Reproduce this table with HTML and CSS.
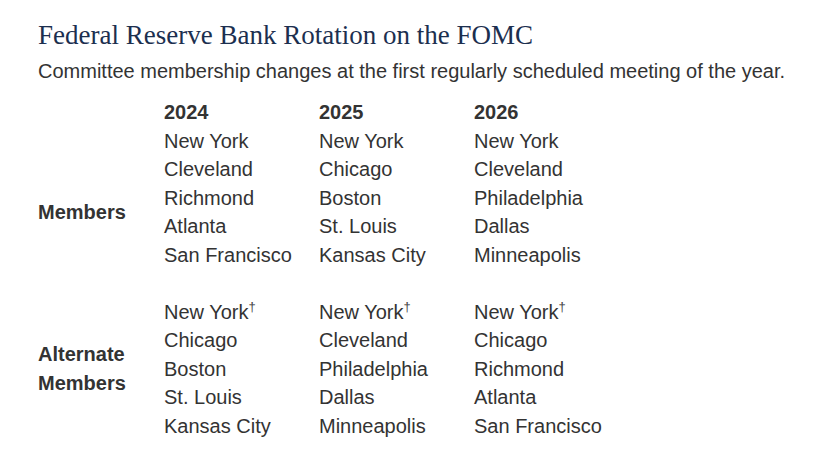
FILE: index.html
```html
<!DOCTYPE html>
<html>
<head>
<meta charset="utf-8">
<link rel="stylesheet" href="styles.css">
</head>
<body>
<div class="wrap">
  <h2 class="title">Federal Reserve Bank Rotation on the FOMC</h2>
  <p class="sub">Committee membership changes at the first regularly scheduled meeting of the year.</p>
  <table class="rot">
    <thead>
      <tr><th class="lab"></th><th>2024</th><th>2025</th><th>2026</th></tr>
    </thead>
    <tbody>
      <tr class="grp">
        <th class="lab">Members</th>
        <td>New York<br>Cleveland<br>Richmond<br>Atlanta<br>San Francisco</td>
        <td>New York<br>Chicago<br>Boston<br>St. Louis<br>Kansas City</td>
        <td>New York<br>Cleveland<br>Philadelphia<br>Dallas<br>Minneapolis</td>
      </tr>
      <tr>
        <th class="lab">Alternate<br>Members</th>
        <td>New York<sup>†</sup><br>Chicago<br>Boston<br>St. Louis<br>Kansas City</td>
        <td>New York<sup>†</sup><br>Cleveland<br>Philadelphia<br>Dallas<br>Minneapolis</td>
        <td>New York<sup>†</sup><br>Chicago<br>Richmond<br>Atlanta<br>San Francisco</td>
      </tr>
    </tbody>
  </table>
</div>
</body>
</html>
```
FILE: styles.css
```css
html, body { margin: 0; padding: 0; background: #fff; }
.wrap { padding: 19px 0 0 38px; font-family: "Liberation Sans", Arial, sans-serif; color: #333; }
.title {
  margin: 0;
  font-family: "Liberation Serif", "Times New Roman", serif;
  font-weight: normal;
  font-size: 27px;
  line-height: 32px;
  color: #1c2f4f;
}
.sub { margin: 7px 0 0 0; font-size: 20px; line-height: 26px; color: #333; white-space: nowrap; }
.rot { border-collapse: collapse; margin-top: 14px; font-size: 20px; line-height: 28.5px; }
.rot th, .rot td { padding: 0; text-align: left; vertical-align: top; }
.rot thead th { font-weight: bold; width: 155px; }
.rot th.lab { width: 126px; vertical-align: middle; font-weight: bold; }
.rot .grp td { padding-bottom: 28.5px; }
.rot td sup { font-size: 13px; line-height: 0; vertical-align: 8px; color: #444; }
```
